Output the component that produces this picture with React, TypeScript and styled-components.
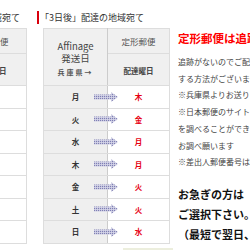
import { useId } from 'react';
import styled, { createGlobalStyle } from 'styled-components';

const GlobalStyle = createGlobalStyle`
  html, body {
    margin: 0;
    padding: 0;
    background: #ffffff;
    overflow: hidden;
  }
  body {
    font-family: 'Noto Sans CJK JP', 'Noto Sans', sans-serif;
    color: #333333;
  }
`;

const Page = styled.div`
  display: flex;
  align-items: flex-start;
  gap: 16px;
  margin-left: -108px;
  width: 420px;
`;

const Section = styled.div<{ $width: number }>`
  width: ${({ $width }) => $width}px;
  flex-shrink: 0;
  display: flex;
  flex-direction: column;
`;

const Heading = styled.div`
  margin: 11px 0 0 -6px;
  height: 13px;
  border-left: 2px solid #d9000d;
  padding-left: 1px;
  font-size: 9px;
  line-height: 13px;
  white-space: nowrap;
  color: #333333;
`;

const Table = styled.table`
  margin-top: 4px;
  width: 100%;
  border-collapse: collapse;
  table-layout: fixed;
`;

const HeadCell = styled.th<{ $tall?: boolean }>`
  background: #f0f0f0;
  border: 1px solid #dddddd;
  height: ${({ $tall }) => ($tall ? '31px' : '24px')};
  padding: 0;
  font-size: 8.5px;
  font-weight: normal;
  color: #555555;
  text-align: center;
  vertical-align: middle;
`;

const OriginCell = styled.th`
  background: #f0f0f0;
  border: 1px solid #dddddd;
  border-right-color: #cccccc;
  padding: 2px 0 0;
  width: 63px;
  font-weight: normal;
  text-align: center;
  vertical-align: middle;
`;

const OriginName = styled.div`
  font-size: 9.5px;
  line-height: 12px;
  color: #444444;
`;

const OriginPref = styled.div`
  margin-top: 3px;
  font-size: 7px;
  line-height: 10px;
  letter-spacing: 2px;
  font-weight: bold;
  color: #555555;
`;

const SubHead = styled.span`
  font-size: 7.5px;
  font-weight: bold;
  color: #444444;
`;

const DayCell = styled.td`
  position: relative;
  background: #efefef;
  border: 1px solid #dddddd;
  border-right-color: #cccccc;
  height: 21.5px;
  padding: 0;
  font-size: 7.5px;
  font-weight: bold;
  color: #333333;
  text-align: center;
`;

const ResultCell = styled.td`
  background: #ffffff;
  border: 1px solid #dddddd;
  padding: 0;
  font-size: 7.5px;
  font-weight: bold;
  color: #e60012;
  text-align: center;
`;

const ArrowWrap = styled.span`
  position: absolute;
  left: 50px;
  top: 50%;
  margin-top: -5px;
  width: 24px;
  height: 10px;
  z-index: 1;
`;

const Footer = styled.div`
  margin: 4px 0 0 80px;
  width: 50px;
  height: 10px;
  background: #eceedd;
`;

const Notes = styled.div`
  flex-shrink: 0;
  width: 90px;
  margin-left: -8px;
  padding-top: 31px;
  display: flex;
  flex-direction: column;
`;

const Alert = styled.div`
  font-size: 11.5px;
  line-height: 14px;
  font-weight: bold;
  color: #ff0000;
  white-space: nowrap;
`;

const NoteText = styled.div`
  margin-top: 9px;
  font-size: 8px;
  line-height: 16.7px;
  color: #444444;
  white-space: nowrap;
`;

const Urgent = styled.div`
  margin-top: 13px;
  font-size: 11px;
  line-height: 20px;
  font-weight: bold;
  color: #111111;
  white-space: nowrap;
`;

const Arrow = () => {
  const id = useId().replace(/:/g, '');
  return (
    <ArrowWrap>
      <svg width="24" height="10" viewBox="0 0 24 10">
        <defs>
          <pattern id={id} width="2" height="2" patternUnits="userSpaceOnUse">
            <rect width="2" height="2" fill="#d8d8ea" />
            <rect width="1.2" height="1.2" fill="#8080b4" />
          </pattern>
        </defs>
        <path d="M0 2.5 H17 V0 L24 5 L17 10 V7.5 H0 Z" fill={`url(#${id})`} />
      </svg>
    </ArrowWrap>
  );
};

interface ScheduleProps {
  heading: string;
  rows: [string, string][];
  width: number;
  footer?: boolean;
}

const Schedule = ({ heading, rows, width, footer }: ScheduleProps) => (
  <Section $width={width}>
    <Heading>{heading}</Heading>
    <Table>
      <tbody>
        <tr>
          <OriginCell rowSpan={2}>
            <OriginName>Affinage</OriginName>
            <OriginName>発送日</OriginName>
            <OriginPref>兵庫県→</OriginPref>
          </OriginCell>
          <HeadCell>定形郵便</HeadCell>
        </tr>
        <tr>
          <HeadCell $tall>
            <SubHead>配達曜日</SubHead>
          </HeadCell>
        </tr>
        {rows.map(([from, to]) => (
          <tr key={from}>
            <DayCell>
              {from}
              <Arrow />
            </DayCell>
            <ResultCell>{to}</ResultCell>
          </tr>
        ))}
      </tbody>
    </Table>
    {footer && <Footer />}
  </Section>
);

const twoDays: [string, string][] = [
  ['月', '水'],
  ['火', '木'],
  ['水', '金'],
  ['木', '土'],
  ['金', '月'],
  ['土', '月'],
  ['日', '火'],
];

const threeDays: [string, string][] = [
  ['月', '木'],
  ['火', '金'],
  ['水', '月'],
  ['木', '月'],
  ['金', '火'],
  ['土', '火'],
  ['日', '水'],
];

const App = () => (
  <>
    <GlobalStyle />
    <Page>
      <Schedule heading="「2日後」配達の一部の地域宛て" rows={twoDays} width={135} />
      <Schedule heading="「3日後」配達の地域宛て" rows={threeDays} width={127} footer />
      <Notes>
        <Alert>定形郵便は追跡できません</Alert>
        <NoteText>
          追跡がないのでご配達を確認
          <br />
          する方法がございません。
          <br />
          ※兵庫県よりお送りします。
          <br />
          ※日本郵便のサイトでお届け日数
          <br />
          を調べることができますので
          <br />
          お調べ願います
          <br />
          ※差出人郵便番号は669-0000
        </NoteText>
        <Urgent>
          お急ぎの方は
          <br />
          ご選択下さい。
          <br />
          （最短で翌日、
        </Urgent>
      </Notes>
    </Page>
  </>
);

export default App;
